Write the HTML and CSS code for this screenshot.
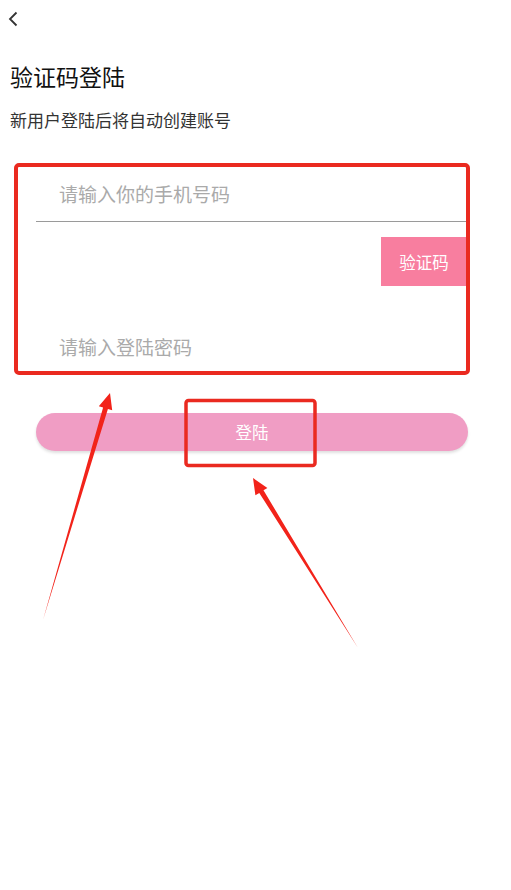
FILE: index.html
```html
<!DOCTYPE html>
<html lang="zh-CN">
<head>
    <meta charset="UTF-8">
    <meta name="viewport" content="width=device-width, initial-scale=1.0">
    <title>验证码登陆</title>
    <link rel="stylesheet" href="styles.css">
</head>
<body>
    <div class="topbar">
        <button type="button" class="back-btn" aria-label="返回">
            <svg width="10" height="16" viewBox="0 0 10 16">
                <path d="M8.5 1.5 L2 8 L8.5 14.5" fill="none" stroke="#333" stroke-width="1.8"/>
            </svg>
        </button>
    </div>

    <h1 class="title">验证码登陆</h1>
    <p class="subtitle">新用户登陆后将自动创建账号</p>

    <form class="login-form">
        <input type="tel" class="field field-phone" placeholder="请输入你的手机号码">
        <div class="code-row">
            <button type="button" class="code-btn">验证码</button>
        </div>
        <input type="password" class="field" placeholder="请输入登陆密码">
        <button type="button" class="submit-btn">登陆</button>
    </form>

    <!-- 标注 -->
    <svg class="annotations" width="511" height="890" viewBox="0 0 511 890">
        <rect x="16" y="165" width="452" height="208" rx="3" fill="none" stroke="#ea2a20" stroke-width="4"/>
        <rect x="186" y="400.5" width="129" height="65" rx="2.5" fill="none" stroke="#ea2a20" stroke-width="3.5"/>
        <polygon points="43,620 103.1,407.6 98.8,406.3 110,393 112.2,410.3 107.9,409" fill="#f2231a"/>
        <polygon points="358,648 263.5,490.3 267.4,487.9 253,478 255.4,495.3 259.3,492.9" fill="#f2231a"/>
    </svg>
</body>
</html>
```

FILE: styles.css
```css
:root {
    --pink: #f09dc4;
    --code-pink: #f87e9f;
    --text-color: #222;
    --hint-color: #aaa;
}
body {
    margin: 0;
    width: 511px;
    min-height: 890px;
    position: relative;
    background: #fff;
    color: var(--text-color);
    font-family: "Noto Sans CJK SC", "Noto Sans", sans-serif;
}
.topbar {
    height: 40px;
    padding: 11px 0 0 7px;
    box-sizing: border-box;
}
.back-btn {
    display: block;
    padding: 0;
    border: none;
    background: none;
    width: 12px;
    height: 16px;
}
.title {
    margin: 20px 0 0 10px;
    font-size: 23px;
    line-height: 32px;
    font-weight: normal;
    color: #111;
}
.subtitle {
    margin: 15px 0 0 10px;
    font-size: 17px;
    line-height: 26px;
    color: #333;
}
.login-form {
    margin: 38px 44px 0 36px;
    display: flex;
    flex-direction: column;
}
.field {
    height: 51px;
    padding: 0 0 6px 23px;
    box-sizing: border-box;
    border: none;
    outline: none;
    background: none;
    font-family: inherit;
    font-size: 19px;
    color: var(--text-color);
}
.field::placeholder {
    color: var(--hint-color);
}
.field-phone {
    border-bottom: 1px solid #9a9a9a;
}
.code-row {
    display: flex;
    justify-content: flex-end;
    margin-top: 15px;
}
.code-btn {
    width: 86px;
    height: 49px;
    border: none;
    background: var(--code-pink);
    color: #fff;
    font-family: inherit;
    font-size: 16.5px;
}
.code-row + .field {
    margin-top: 38px;
}
.submit-btn {
    margin: 38px -1px 0 0;
    height: 38px;
    border: none;
    border-radius: 19px;
    background: var(--pink);
    color: #fff;
    font-family: inherit;
    font-size: 16.5px;
    box-shadow: 0 2px 3px rgba(0, 0, 0, 0.13);
}
.annotations {
    position: absolute;
    top: 0;
    left: 0;
    pointer-events: none;
}
```
